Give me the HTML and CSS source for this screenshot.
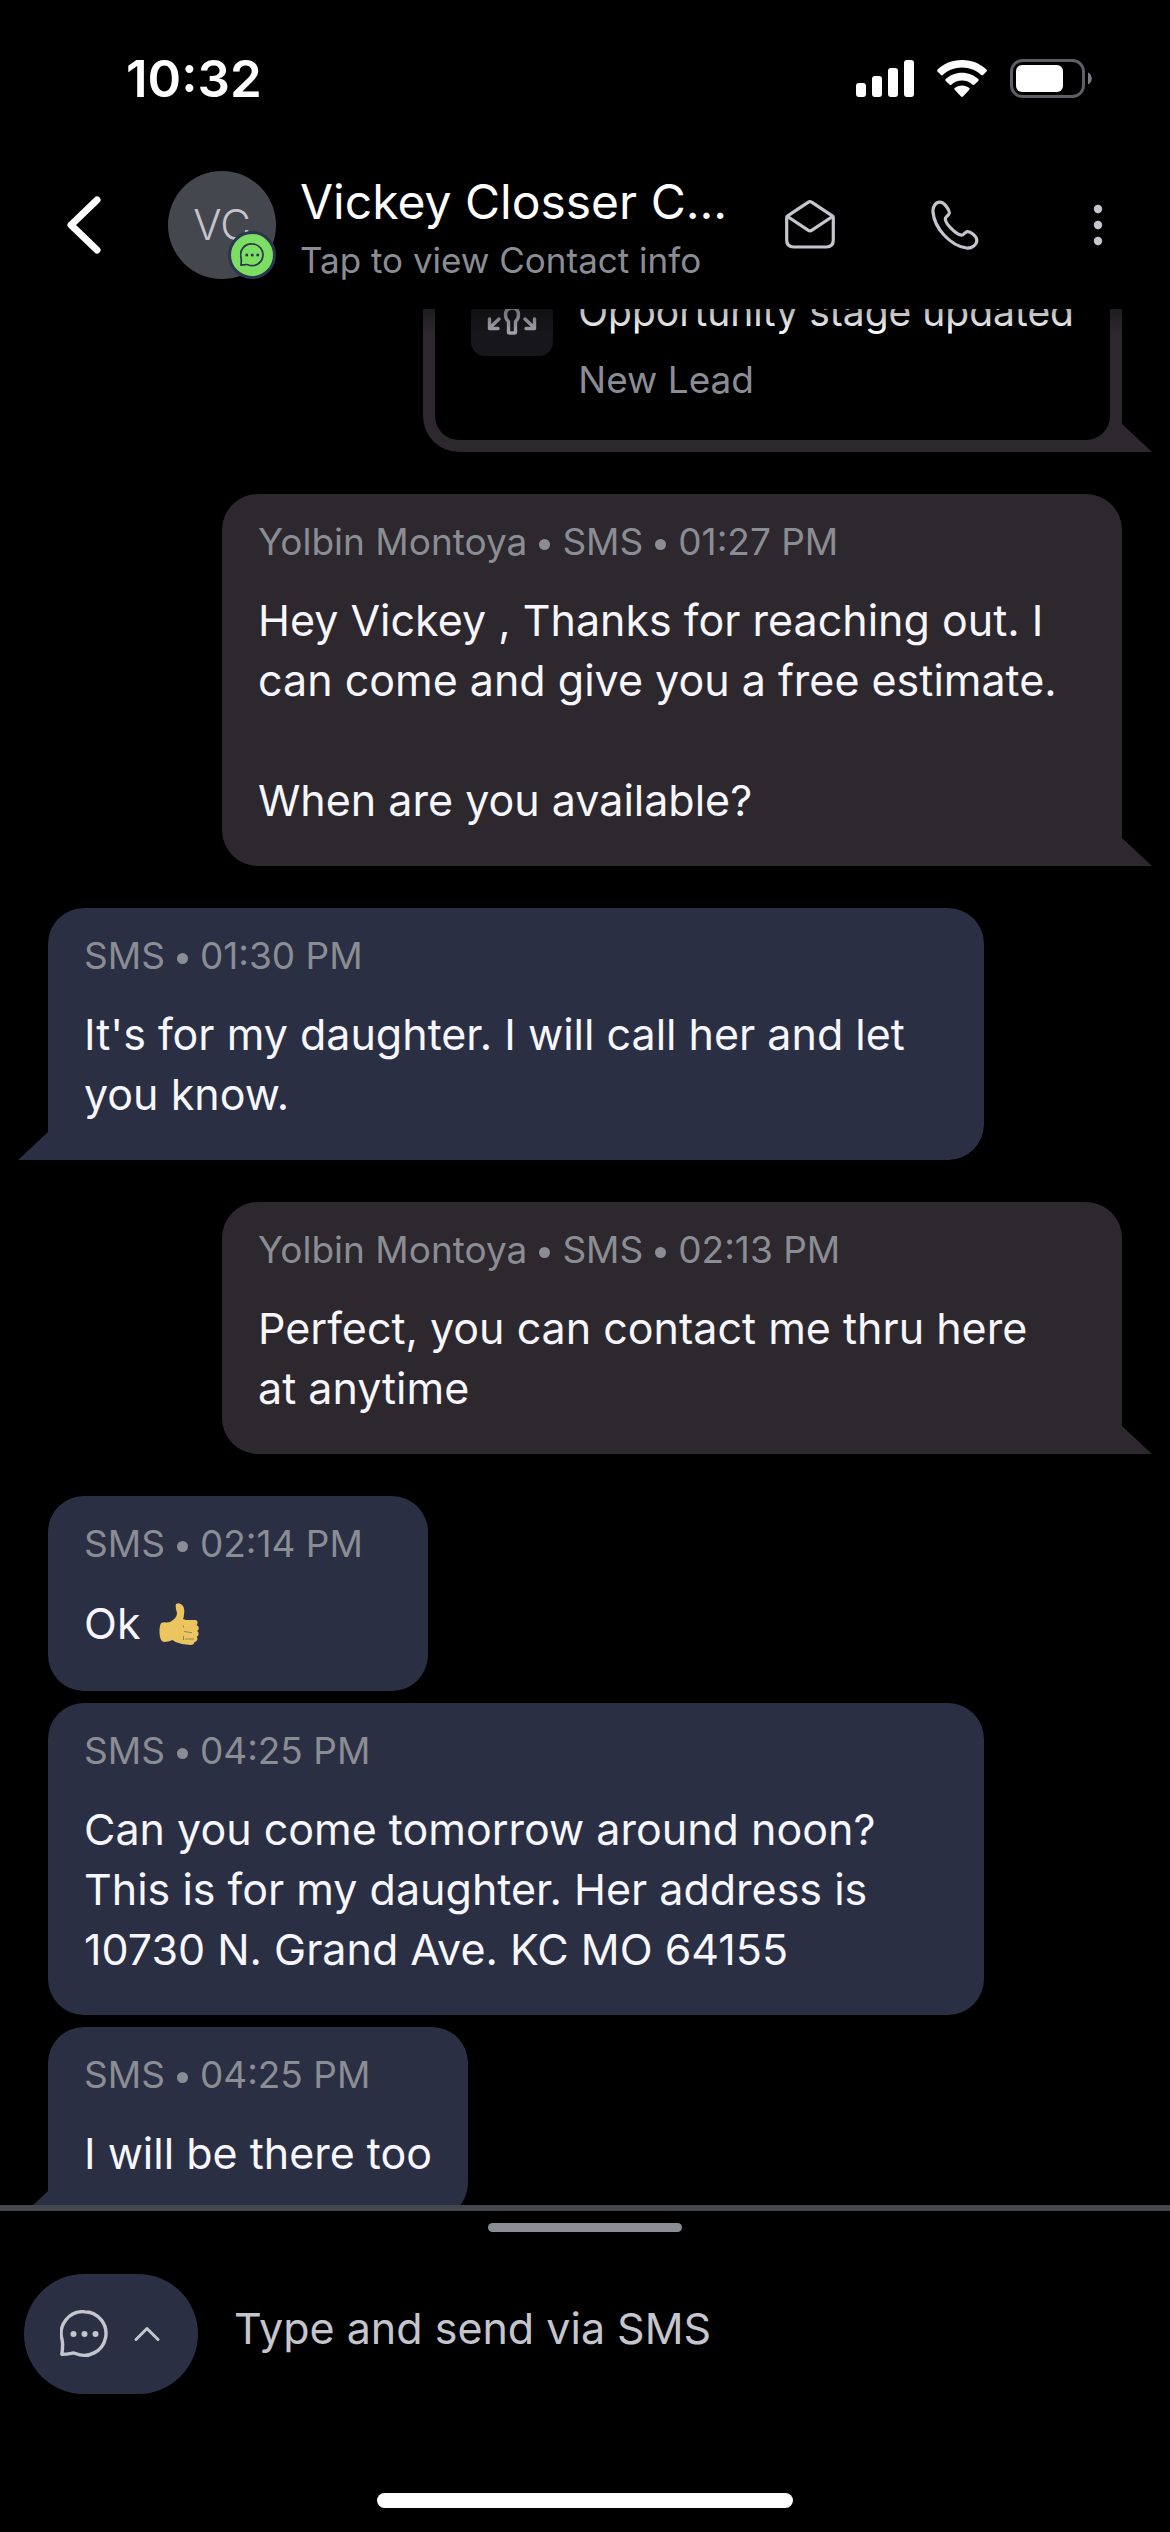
FILE: index.html
```html
<!DOCTYPE html>
<html lang="en">
<head>
<meta charset="utf-8">
<meta name="viewport" content="width=device-width">
<title>Vickey Closser</title>
<link rel="stylesheet" href="styles.css">
</head>
<body>
<svg class="defs" aria-hidden="true">
  <symbol id="chat" viewBox="0 0 48 48">
    <path d="M24.500 1.700a21.800 21.800 0 1 1-9 41.800q-2-.8-4.500-.2-4 .8-9.200 1 .8-5 .8-9.500 0-3-.5-5A21.800 21.800 0 0 1 24.500 1.700z" fill="none" stroke="currentColor" stroke-width="3.400" stroke-linejoin="round"/>
    <circle cx="13.500" cy="24" r="3" fill="currentColor"/><circle cx="24.500" cy="24" r="3" fill="currentColor"/><circle cx="35.500" cy="24" r="3" fill="currentColor"/>
  </symbol>
</svg>
<div class="app">
  <div class="status">
    <time>10:32</time>
    <div class="status-icons">
      <svg width="58" height="38" viewBox="0 0 58 38" fill="#fff"><rect y="23" width="10" height="14" rx="3"/><rect x="16" y="16" width="10" height="21" rx="3"/><rect x="32" y="8" width="10" height="29" rx="3"/><rect x="48" width="10" height="37" rx="3"/></svg>
      <svg width="52" height="38" viewBox="0 0 52 38" fill="#fff"><path d="M26 0C36 0 44.500 3.800 50.500 9.600q.9.900 0 1.800L47 15q-.9.900-1.800 0C40.200 10.300 33.500 7.500 26 7.500S11.800 10.300 6.800 15q-.9.900-1.800 0L1.500 11.400q-.9-.9 0-1.800C7.500 3.800 16 0 26 0z"/><path d="M26 12.700c6.300 0 12 2.400 16.300 6.400q.9.900 0 1.800L38.500 24.600q-.9.900-1.800.1C33.800 22.100 30.200 20.500 26 20.500s-7.800 1.600-10.700 4.200q-.9.800-1.800-.1L9.700 20.900q-.9-.9 0-1.800C14 15.100 19.700 12.700 26 12.700z"/><path d="M26 25.500c2.800 0 5.300 1 7.300 2.600q.9.800 0 1.700L27 36.500q-1 .9-2 0l-6.300-6.700q-.9-.9 0-1.700C20.700 26.500 23.200 25.500 26 25.500z"/></svg>
      <svg width="82" height="40" viewBox="0 0 82 40"><rect x="1.500" y="1.500" width="72" height="36" rx="11" fill="none" stroke="#5d5e66" stroke-width="3"/><rect x="6" y="6" width="47" height="27" rx="6" fill="#fff"/><path d="M78 13.500c5 2 5 10 0 12z" fill="#7b7c84"/></svg>
    </div>
  </div>
  <header class="header">
    <button class="icon-btn back" aria-label="Back"><svg width="34" height="58" viewBox="0 0 34 58"><path d="M30 4 4 29l26 25" fill="none" stroke="#fff" stroke-width="7" stroke-linecap="round" stroke-linejoin="round"/></svg></button>
    <div class="avatar">VC<span class="badge"><svg width="24" height="24"><use href="#chat"/></svg></span></div>
    <div class="who">
      <h1>Vickey Closser C...</h1>
      <p>Tap to view Contact info</p>
    </div>
    <div class="actions">
      <button class="icon-btn" aria-label="Email"><svg width="50" height="50" viewBox="0 0 50 50" fill="none" stroke="#c4c5cd" stroke-width="3.200" stroke-linejoin="round"><path d="M1.700 17.500V40q0 7 7 7h32.600q7 0 7-7V17.500q0-1-1-1.700L27 2.300q-2-1.200-4 0L2.700 15.800q-1 .7-1 1.700z"/><path d="M2.500 16.500 23 30.200q2 1.200 4 0L47.500 16.500"/></svg></button>
      <button class="icon-btn" aria-label="Call"><svg width="50" height="50" viewBox="0 0 50 50"><path d="M9.500 2.200C5 1.500 1.500 6.500 2 12c1.300 16 17.500 34 33.500 36 5.500.6 10.500-3.500 10.300-8-.1-4-6.500-8.700-9.500-8.400-2.800.3-3.300 3.800-6 3.600C25 34.500 14.500 24 14.300 19c0-2.700 3.500-3.200 4-6 .4-3-4.800-10.300-8.800-10.800z" fill="none" stroke="#c4c5cd" stroke-width="3.200" stroke-linejoin="round"/></svg></button>
      <button class="icon-btn more" aria-label="More"><svg width="10" height="42" viewBox="0 0 10 42" fill="#c4c5cd"><circle cx="5" cy="5" r="4.200"/><circle cx="5" cy="21" r="4.200"/><circle cx="5" cy="37" r="4.200"/></svg></button>
    </div>
  </header>

  <main class="chat">
    <article class="bubble out card tail">
      <div class="card-inner">
        <span class="card-icon"><svg width="54" height="54" viewBox="0 0 54 54" fill="none" stroke="#a0a1aa" stroke-width="3.400" stroke-linecap="round" stroke-linejoin="round"><path d="M23.500 45V34.500Q20.500 32 20.500 28 20.500 21 27 21t6.500 7q0 4-3 6.500V45q0 1-1 1h-5q-1 0-1-1z"/><path d="M14 32 4.500 41M4.500 32v9.500H13M40 32l9.500 9M49.500 32v9.500H41"/></svg></span>
        <div class="card-text">
          <p class="card-title">Opportunity stage updated</p>
          <p class="card-sub">New Lead</p>
        </div>
      </div>
    </article>

    <article class="bubble out wide tail">
      <p class="meta">Yolbin Montoya <i></i> SMS <i></i> 01:27 PM</p>
      <p class="text">Hey Vickey , Thanks for reaching out. I
can come and give you a free estimate.

When are you available?</p>
    </article>

    <article class="bubble in wide tail">
      <p class="meta">SMS <i></i> 01:30 PM</p>
      <p class="text">It's for my daughter. I will call her and let
you know.</p>
    </article>

    <article class="bubble out wide tail">
      <p class="meta">Yolbin Montoya <i></i> SMS <i></i> 02:13 PM</p>
      <p class="text">Perfect, you can contact me thru here
at anytime</p>
    </article>

    <div class="group">
      <article class="bubble in short">
        <p class="meta">SMS <i></i> 02:14 PM</p>
        <p class="text with-emoji">Ok <svg role="img" aria-label="thumbs up" width="40" height="42" viewBox="0 0 40 42"><path d="M17 1q4-2 7 2 2 3 1 8 0 3-1 5l3 1h9q3 0 2.500 3 0 1.500-1 2 2.500 1 2.300 3.500-.3 2-1.800 2.500 2 1 1.500 3.500-.4 2-1.800 2.300 1 1 .5 3.200-.8 2-2.700 2-.5 3-4 3-8 0-15-3l-3-2q-4 2-8 2Q1 39 .5 30q-.2-8 2-10.300Q5 19 8 19.500q3 0 6-2.500 4-3 4-7-2-6-1-9z" fill="#edc55f"/><path d="M24.500 22.500v2M25 28.500l8 1.200M26 36h9M24.500 33v4" stroke="#8f8260" stroke-width="1" fill="none"/></svg></p>
      </article>
      <article class="bubble in wide">
        <p class="meta">SMS <i></i> 04:25 PM</p>
        <p class="text">Can you come tomorrow around noon?
This is for my daughter. Her address is
10730 N. Grand Ave. KC MO 64155</p>
      </article>
      <article class="bubble in tail">
        <p class="meta">SMS <i></i> 04:25 PM</p>
        <p class="text">I will be there too</p>
      </article>
    </div>
  </main>

  <footer class="composer">
    <div class="grabber"></div>
    <form class="compose-row">
      <button class="channel" type="button" aria-label="Choose channel"><svg width="48" height="48"><use href="#chat"/></svg><svg width="26" height="16" viewBox="0 0 26 16"><path d="M2 13.500 13 2.500l11 11" fill="none" stroke="currentColor" stroke-width="3" stroke-linecap="round" stroke-linejoin="round"/></svg></button>
      <input type="text" aria-label="Message" placeholder="Type and send via SMS">
    </form>
    <div class="home"></div>
  </footer>
</div>
</body>
</html>
```
FILE: styles.css
```css
* { box-sizing: border-box; }
body, h1, p { margin: 0; }
body {
  background: #000;
  color: #fff;
  font-family: Inter, "Liberation Sans", sans-serif;
  font-optical-sizing: none;
}
button, input {
  font: inherit;
  color: inherit;
  background: none;
  border: 0;
  padding: 0;
}
svg { display: block; flex: none; }
.defs { position: absolute; width: 0; height: 0; }

.app { height: 100vh; display: flex; flex-direction: column; }

/* status bar */
.status {
  height: 141px;
  flex: none;
  display: flex;
  justify-content: space-between;
  align-items: center;
  padding: 16px 78px 0 126px;
}
.status time { font-size: 51px; line-height: 60px; font-weight: 600; }
.status-icons { display: flex; align-items: center; gap: 22px; }

/* header */
.header {
  height: 168px;
  flex: none;
  display: flex;
  align-items: center;
  padding: 0 67px;
}
.icon-btn { display: flex; align-items: center; justify-content: center; }
.avatar {
  position: relative;
  flex: none;
  width: 108px;
  height: 108px;
  margin-left: 67px;
  border-radius: 50%;
  background: #45474f;
  color: #c4c5cd;
  font-size: 42px;
  font-weight: 300;
  line-height: 108px;
  text-align: center;
}
.badge {
  position: absolute;
  right: 0;
  bottom: 0;
  width: 48px;
  height: 48px;
  display: flex;
  align-items: center;
  justify-content: center;
  border: 3px solid #2a3550;
  border-radius: 50%;
  background: #7cdf64;
  color: #2a3550;
}
.who { flex: 1; min-width: 0; margin: 0 48px 0 24px; padding-top: 6px; }
.who h1 {
  font-size: 48px;
  line-height: 60px;
  font-weight: 400;
  white-space: nowrap;
  overflow: hidden;
  text-overflow: ellipsis;
}
.who p { font-size: 35px; line-height: 48px; margin-top: 4px; color: #8b8d94; }
.actions { display: flex; align-items: center; gap: 96px; }
.more { margin-left: 16px; }

/* conversation */
.chat {
  position: relative;
  flex: 1;
  min-height: 0;
  overflow: hidden;
  display: flex;
  flex-direction: column;
  justify-content: flex-end;
  gap: 42px;
  padding: 0 48px;
}
.chat::before {
  content: "";
  position: absolute;
  z-index: 1;
  inset: 0 0 auto;
  height: 24px;
  background: linear-gradient(rgba(0, 0, 0, .3), transparent);
}
.group { display: flex; flex-direction: column; gap: 12px; }
.bubble {
  position: relative;
  flex: none;
  width: fit-content;
  padding: 24px 36px 36px;
  border-radius: 36px;
}
.in { background: #2a2f43; max-width: 936px; }
.out { background: #2c282d; max-width: 900px; align-self: flex-end; }
.wide { width: 100%; }
.short { min-width: 380px; }
.out.tail { border-bottom-right-radius: 0; }
.in.tail { border-bottom-left-radius: 0; }
.tail::after {
  content: "";
  position: absolute;
  bottom: 0;
  width: 30px;
  height: 28px;
  background: inherit;
}
.out.tail::after { left: 100%; clip-path: polygon(0 0, 100% 100%, 0 100%); }
.in.tail::after { right: 100%; clip-path: polygon(100% 0, 100% 100%, 0 100%); }
.meta {
  display: flex;
  align-items: center;
  gap: 12px;
  font-size: 37px;
  line-height: 48px;
  color: #8b8d94;
}
.meta i { width: 11px; height: 11px; margin-top: 4px; border-radius: 50%; background: currentColor; }
.text {
  margin-top: 24px;
  font-size: 43px;
  line-height: 60px;
  color: #f6f6fc;
  white-space: pre-wrap;
}
.with-emoji { display: flex; align-items: center; gap: 6px; line-height: 63px; }

.bubble.card { padding: 12px; }
.card-inner {
  display: flex;
  gap: 25px;
  padding: 36px;
  border-radius: 24px;
  background: #000;
}
.card-icon {
  width: 82px;
  height: 84px;
  display: flex;
  align-items: center;
  justify-content: center;
  border-radius: 14px;
  background: #17171b;
}
.card-text { padding-top: 16px; }
.card-title { font-size: 39px; line-height: 48px; }
.card-sub { margin-top: 20px; font-size: 37px; line-height: 48px; color: #8b8d94; }

/* composer */
.composer {
  position: relative;
  flex: none;
  margin-top: -14px;
  padding-bottom: 24px;
  border-top: 6px solid #45474f;
  background: #000;
}
.grabber { width: 194px; height: 9px; margin: 12px auto 42px; border-radius: 5px; background: #8b8d94; }
.compose-row { display: flex; align-items: center; gap: 36px; padding: 0 24px; }
.channel {
  flex: none;
  display: flex;
  align-items: center;
  gap: 26px;
  height: 120px;
  padding: 0 38px 0 36px;
  border-radius: 60px;
  background: #2a2f43;
  color: #c4c5cd;
}
.compose-row input { flex: 1; min-width: 0; height: 60px; margin-bottom: 12px; font-size: 43px; outline: 0; }
.compose-row input::placeholder { color: #c4c5cd; opacity: 1; }
.home { width: 416px; height: 15px; margin: 99px auto 0; border-radius: 8px; background: #fff; }
```
